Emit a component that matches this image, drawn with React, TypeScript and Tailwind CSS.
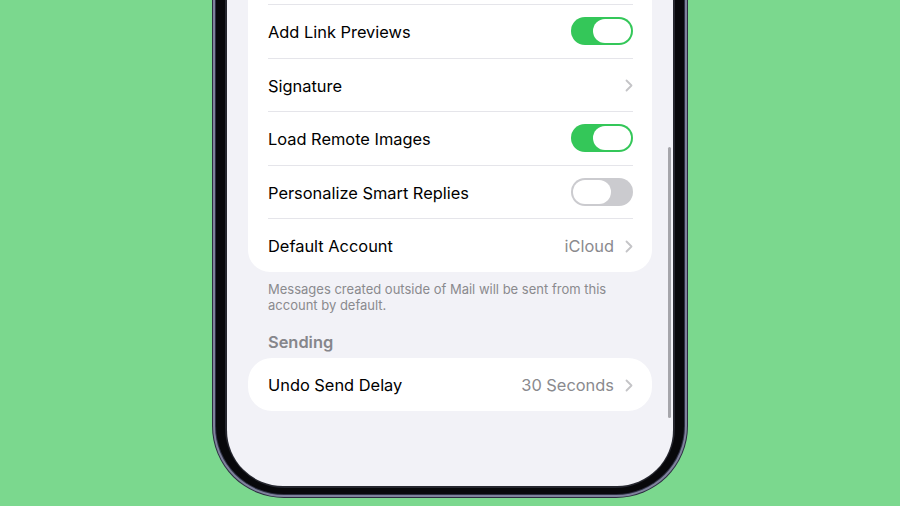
function Chevron() {
  return (
    <svg width="8" height="13" viewBox="0 0 8 13" fill="none" className="ml-[11px] mt-[2px]">
      <path d="M1.5 1.5L6.5 6.5L1.5 11.5" stroke="#c4c4c7" strokeWidth="1.8" strokeLinecap="round" strokeLinejoin="round" />
    </svg>
  );
}

function Toggle({ on }: { on: boolean }) {
  return (
    <div
      className={`flex h-[28px] w-[62px] items-center rounded-full p-[2px] ${
        on ? "justify-end bg-[#34c759]" : "justify-start bg-[#cbcbcf]"
      }`}
    >
      <div className="h-[24px] w-[38px] rounded-full bg-white" />
    </div>
  );
}

type Row = { label: string; toggle?: boolean; value?: string; chevron?: boolean };

const rows: Row[] = [
  { label: "Add Link Previews", toggle: true },
  { label: "Signature", chevron: true },
  { label: "Load Remote Images", toggle: true },
  { label: "Personalize Smart Replies", toggle: false },
  { label: "Default Account", value: "iCloud", chevron: true },
];

export default function App() {
  return (
    <div className="flex h-[506px] w-[900px] justify-center overflow-hidden bg-[#7bd88e]">
      <div className="h-[498px] w-[476px] rounded-b-[72px] bg-[#2c2e40] px-[1px] pb-[1px]">
        <div className="h-full rounded-b-[71px] bg-[#7f829c] px-[2px] pb-[2px]">
          <div className="h-full rounded-b-[69px] bg-[#2f3144] px-[1px] pb-[1px]">
            <div className="h-full rounded-b-[68px] bg-[#08080b] px-[9px] pb-[6px]">
              <div className="h-full rounded-b-[60px] bg-[#26272f] px-[2px] pb-[2px]">
                <div className="relative h-full overflow-hidden rounded-b-[56px] bg-[#f2f2f7] font-[Inter,sans-serif] text-black">
                  <div className="mx-[21px] rounded-b-[22px] bg-white pb-[0.5px]">
                    <div className="h-[4px]" />
                    {rows.map((row) => (
                      <div
                        key={row.label}
                        className="ml-5 mr-[19px] flex h-[53.5px] items-center justify-between border-t border-[#e5e5ea]"
                      >
                        <span className="pt-[3px] text-[16.4px]">{row.label}</span>
                        <div className="flex items-center">
                          {row.value && <span className="pt-[3px] text-[16.4px] text-[#8a8a8e]">{row.value}</span>}
                          {row.toggle !== undefined && <Toggle on={row.toggle} />}
                          {row.chevron && <Chevron />}
                        </div>
                      </div>
                    ))}
                  </div>

                  <p className="px-[41px] pt-[9px] text-[13px] leading-[16px] text-[#8a8a8e]">
                    Messages created outside of Mail will be sent from this
                    <br />
                    account by default.
                  </p>

                  <h2 className="px-[41px] pt-[18px] text-[16.4px] font-semibold leading-[22px] text-[#86868b]">
                    Sending
                  </h2>

                  <div className="mx-[21px] mt-[5px] flex h-[53px] items-center justify-between rounded-[24px] bg-white pl-5 pr-[19px]">
                    <span className="pt-[2px] text-[16.4px]">Undo Send Delay</span>
                    <div className="flex items-center">
                      <span className="pt-[2px] text-[16.4px] text-[#8a8a8e]">30 Seconds</span>
                      <Chevron />
                    </div>
                  </div>

                  <div className="absolute right-[2px] top-[147px] h-[271px] w-[3px] rounded-full bg-[#a6a6ab]" />
                </div>
              </div>
            </div>
          </div>
        </div>
      </div>
    </div>
  );
}
